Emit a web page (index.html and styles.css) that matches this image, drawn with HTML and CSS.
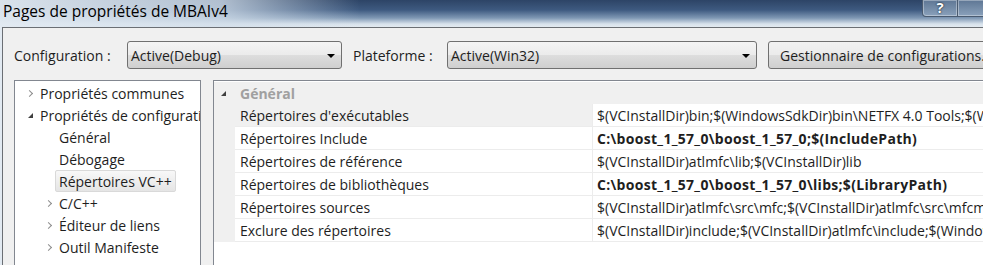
FILE: index.html
```html
<!DOCTYPE html>
<html lang="fr">
<head>
  <meta charset="UTF-8">
  <title>Pages de propriétés de MBAIv4</title>
  <link rel="stylesheet" href="styles.css">
</head>
<body>
  <div class="window">
    <div class="titlebar">
      <span class="title">Pages de propriétés de MBAIv4</span>
      <div class="caption-buttons">
        <span class="cap-btn help">?</span>
        <span class="cap-btn close"></span>
      </div>
    </div>

    <div class="client">
      <div class="toolbar">
        <span class="label label-config">Configuration :</span>
        <div class="combo combo-config">
          <span>Active(Debug)</span>
          <span class="arrow"></span>
        </div>
        <span class="label label-platform">Plateforme :</span>
        <div class="combo combo-platform">
          <span>Active(Win32)</span>
          <span class="arrow"></span>
        </div>
        <div class="button">Gestionnaire de configurations...</div>
      </div>

      <div class="panels">
        <ul class="tree">
          <li class="lvl1"><span class="chev"></span>Propriétés communes</li>
          <li class="lvl1"><span class="tri"></span>Propriétés de configuration</li>
          <li class="lvl2">Général</li>
          <li class="lvl2">Débogage</li>
          <li class="lvl2"><span class="selected">Répertoires VC++</span></li>
          <li class="lvl2"><span class="chev"></span>C/C++</li>
          <li class="lvl2"><span class="chev"></span>Éditeur de liens</li>
          <li class="lvl2"><span class="chev"></span>Outil Manifeste</li>
          <li class="lvl2"><span class="chev"></span>Ressources</li>
        </ul>

        <div class="grid">
          <div class="group-head"><span class="tri tri-grid"></span>Général</div>
          <div class="row row-current">
            <div class="name">Répertoires d'exécutables</div>
            <div class="value">$(VCInstallDir)bin;$(WindowsSdkDir)bin\NETFX 4.0 Tools;$(WindowsSdkDir)bin;$(VSInstallDir)Common7\Tools\bin</div>
          </div>
          <div class="row">
            <div class="name">Répertoires Include</div>
            <div class="value bold">C:\boost_1_57_0\boost_1_57_0;$(IncludePath)</div>
          </div>
          <div class="row">
            <div class="name">Répertoires de référence</div>
            <div class="value">$(VCInstallDir)atlmfc\lib;$(VCInstallDir)lib</div>
          </div>
          <div class="row">
            <div class="name">Répertoires de bibliothèques</div>
            <div class="value bold">C:\boost_1_57_0\boost_1_57_0\libs;$(LibraryPath)</div>
          </div>
          <div class="row">
            <div class="name">Répertoires sources</div>
            <div class="value">$(VCInstallDir)atlmfc\src\mfc;$(VCInstallDir)atlmfc\src\mfcm;$(VCInstallDir)atlmfc\src\atl</div>
          </div>
          <div class="row">
            <div class="name">Exclure des répertoires</div>
            <div class="value">$(VCInstallDir)include;$(VCInstallDir)atlmfc\include;$(WindowsSdkDir)include</div>
          </div>
        </div>
      </div>
    </div>
  </div>
</body>
</html>
```

FILE: styles.css
```css
body {
  margin: 0;
  width: 983px;
  height: 265px;
  overflow: hidden;
  font-family: 'Open Sans', 'Noto Sans', sans-serif;
  font-size: 14px;
  color: #1e1e1e;
}

.window {
  height: 265px;
  background:
    linear-gradient(to right, rgba(226, 234, 242, 0.95) 0, rgba(210, 222, 234, 0.8) 220px, rgba(210, 222, 234, 0) 360px),
    linear-gradient(to bottom, #2d4466 0, #3e5a80 10px, #7f98b4 18px, #d8e2ec 24px, #e6ecf2 28px);
  display: flex;
  flex-direction: column;
}

/* title bar */
.titlebar {
  height: 27px;
  flex: none;
  display: flex;
  align-items: flex-start;
  justify-content: space-between;
}

.title {
  margin: 1px 0 0 3px;
  font-size: 15.5px;
  line-height: 20px;
  color: #000;
}

.caption-buttons {
  display: flex;
  margin-right: -14px;
}

.cap-btn {
  height: 16px;
  border: 1px solid #4a5b70;
  border-top: none;
  border-radius: 0 0 4px 4px;
  background: linear-gradient(to bottom, #5e7694, #8aa1bb);
  box-shadow: inset 0 0 0 1px rgba(255, 255, 255, 0.35);
}

.help {
  width: 34px;
  color: #fff;
  font-weight: bold;
  font-size: 15px;
  line-height: 15px;
  text-align: center;
  text-shadow: 0 0 2px #1c2a3a, 0 0 1px #1c2a3a;
  border-radius: 0 0 0 4px;
}

.close {
  width: 38px;
  border-left: none;
  border-radius: 0;
}

/* client area */
.client {
  flex: 1;
  margin-left: 2px;
  border-top: 1px solid #6b6f74;
  border-left: 1px solid #6b6f74;
  background: #f0f0f0;
  display: flex;
  flex-direction: column;
  overflow: hidden;
}

.toolbar {
  flex: none;
  display: flex;
  align-items: center;
  height: 28px;
  margin-top: 13px;
  padding-left: 11px;
}

.toolbar > * {
  flex: none;
}

.label {
  color: #1e1e1e;
  padding-top: 1px;
}

.label-config {
  width: 113px;
}

.label-platform {
  width: 94px;
}

.combo {
  height: 26px;
  border: 1px solid #707070;
  border-radius: 3px;
  background: linear-gradient(to bottom, #f4f4f4 0, #ebebeb 50%, #dddddd 51%, #cfcfcf 100%);
  display: flex;
  align-items: center;
  justify-content: space-between;
  padding: 1px 6px 0 3px;
  box-sizing: border-box;
  height: 28px;
}

.combo-config {
  width: 215px;
  margin-right: 11px;
}

.combo-platform {
  width: 310px;
  margin-right: 11px;
}

.arrow {
  width: 0;
  height: 0;
  border-left: 4px solid transparent;
  border-right: 4px solid transparent;
  border-top: 4px solid #000;
}

.button {
  height: 28px;
  box-sizing: border-box;
  line-height: 27px;
  padding: 0 11px;
  border: 1px solid #707070;
  border-radius: 3px;
  background: linear-gradient(to bottom, #f2f2f2 0, #ebebeb 50%, #dddddd 51%, #cfcfcf 100%);
  white-space: nowrap;
}

/* panels */
.panels {
  flex: 1;
  display: flex;
  gap: 12px;
  margin-top: 11px;
  padding-left: 11px;
  min-height: 0;
}

.tree {
  list-style: none;
  margin: 0;
  padding: 1px 0 0;
  width: 185px;
  flex: none;
  background: #fff;
  border: 1px solid #828790;
  border-bottom: none;
  overflow: hidden;
}

.tree li {
  position: relative;
  height: 22px;
  line-height: 24px;
  white-space: nowrap;
}

.lvl1 {
  padding-left: 25px;
}

.lvl2 {
  padding-left: 44px;
}

.chev {
  position: absolute;
  top: 9px;
  width: 4px;
  height: 4px;
  border-right: 1px solid #8c8c8c;
  border-top: 1px solid #8c8c8c;
  transform: rotate(45deg);
}

.lvl1 .chev {
  left: 12px;
}

.lvl2 .chev {
  left: 31px;
}

.tri {
  position: absolute;
  left: 13px;
  top: 9px;
  width: 0;
  height: 0;
  border-left: 5px solid transparent;
  border-bottom: 5px solid #404040;
}

.selected {
  display: inline-block;
  margin-left: -4px;
  padding: 0 3px;
  height: 20px;
  line-height: 22px;
  border: 1px solid #d9d9d9;
  border-radius: 2px;
  background: linear-gradient(to bottom, #f8f8f8, #e5e5e5);
}

/* property grid */
.grid {
  flex: 1;
  background: #fff;
  border: 1px solid #828790;
  border-right: none;
  border-bottom: none;
  overflow: hidden;
  padding-top: 1px;
}

.group-head {
  position: relative;
  height: 22px;
  line-height: 24px;
  padding-left: 26px;
  background: #f0f0f0;
  color: #a0a0a0;
  font-weight: bold;
}

.tri-grid {
  left: 7px;
}

.row {
  display: flex;
  height: 23px;
  line-height: 24px;
  border-left: 21px solid #f0f0f0;
}

.name {
  width: 352px;
  flex: none;
  padding-left: 5px;
  border-bottom: 1px solid #ececec;
  border-right: 1px solid #ececec;
  white-space: nowrap;
  overflow: hidden;
}

.value {
  flex: 1;
  padding-left: 4px;
  border-bottom: 1px solid #ececec;
  white-space: nowrap;
  overflow: hidden;
}

.row-current .name {
  background: #f0f0f0;
}

.bold {
  font-weight: bold;
  letter-spacing: 0.3px;
}
```
